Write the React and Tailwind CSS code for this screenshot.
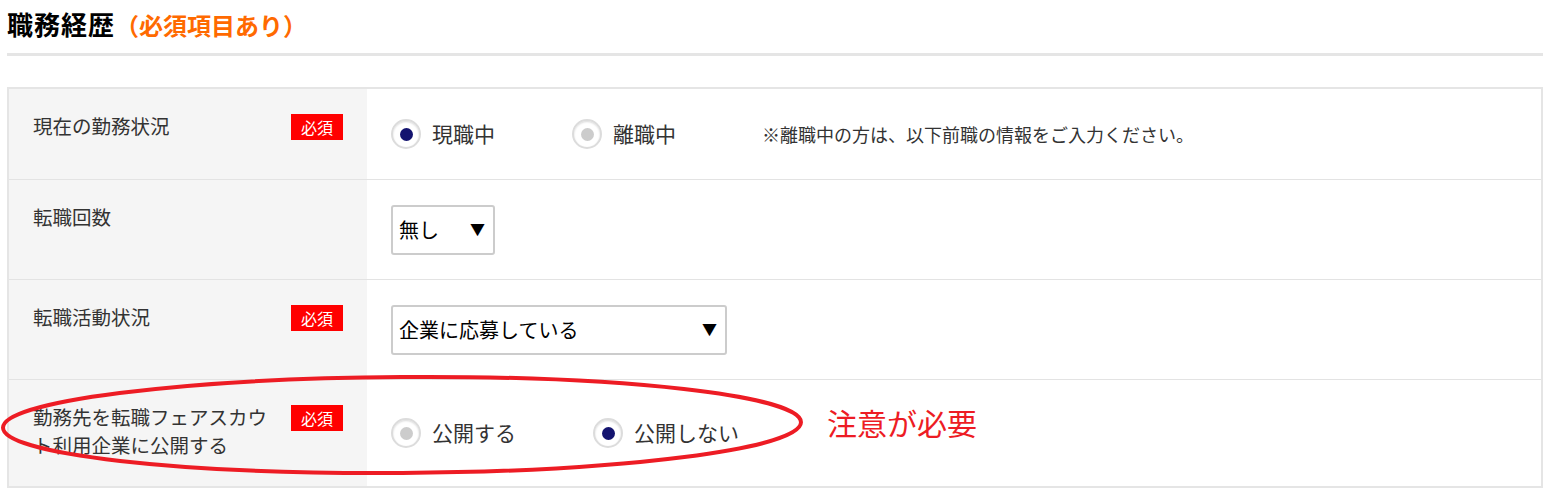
import React from 'react';

const font = { fontFamily: '"Noto Sans CJK JP", "Noto Sans", sans-serif' };

const Badge = () => (
  <span className="mt-[2px] flex h-[26px] w-[52px] shrink-0 items-center justify-center bg-[#ff0000] text-[16px] leading-none text-white">
    必須
  </span>
);

const Radio = ({ checked, label, className = '' }) => (
  <label className={`flex items-center ${className}`}>
    <span className="flex h-[30px] w-[30px] items-center justify-center rounded-full border-2 border-[#dcdcdc] bg-white shadow-[inset_0_1px_2px_rgba(0,0,0,0.15)]">
      <span className={`h-[13px] w-[13px] rounded-full ${checked ? 'bg-[#13136f]' : 'bg-[#cccccc]'}`} />
    </span>
    <span className="ml-[11px] text-[21px] text-[#333]">{label}</span>
  </label>
);

const Select = ({ value, width }) => (
  <div className={`flex h-[50px] ${width} items-center justify-between rounded-[3px] border-2 border-[#cccccc] bg-white pl-[6px] pr-[8px]`}>
    <span className="text-[20px] text-black">{value}</span>
    <span className="text-[15px] text-black">▼</span>
  </div>
);

const Row = ({ height, label, required, children, last }) => (
  <div className={`flex ${height} ${last ? '' : 'border-b border-[#e3e3e3]'}`}>
    <div className="flex w-[358px] shrink-0 items-start justify-between bg-[#f5f5f5] pl-[24px] pr-[24px] pt-[23px]">
      <span className="w-[250px] text-[19.5px] leading-[28px] text-[#333]">{label}</span>
      {required && <Badge />}
    </div>
    <div className="flex flex-1 items-center pl-[24px]">{children}</div>
  </div>
);

export default function App() {
  return (
    <div className="relative w-[1551px] bg-white pl-[7px] pr-[8px] pb-[13px]" style={font}>
      <div className="pt-[8px] pb-[12px]">
        <h2 className="text-[26px] font-bold leading-[32px] tracking-[1px] text-black">
          職務経歴<span className="text-[24px] tracking-[0px] text-[#ff6a00]">（必須項目あり）</span>
        </h2>
      </div>
      <div className="h-[3px] bg-[#e5e5e5]" />
      <div className="mt-[31px] border-2 border-[#e5e5e5]">
        <Row height="h-[91px]" label="現在の勤務状況" required>
          <Radio checked label="現職中" className="w-[181px]" />
          <Radio label="離職中" className="w-[190px]" />
          <span className="text-[18px] text-[#333]">※離職中の方は、以下前職の情報をご入力ください。</span>
        </Row>
        <Row height="h-[100px]" label="転職回数">
          <Select value="無し" width="w-[104px]" />
        </Row>
        <Row height="h-[100px]" label="転職活動状況" required>
          <Select value="企業に応募している" width="w-[336px]" />
        </Row>
        <Row
          height="h-[106px]"
          label={<>勤務先を転職フェアスカウ<br />ト利用企業に公開する</>}
          required
          last
        >
          <Radio label="公開する" className="w-[202px]" />
          <Radio checked label="公開しない" />
          <span className="ml-[88px] -mt-[22px] text-[30px] text-[#ed1c24]">注意が必要</span>
        </Row>
      </div>
      <svg className="pointer-events-none absolute left-0 top-[372px]" width="810" height="108" viewBox="0 0 810 108">
        <ellipse cx="402" cy="53" rx="399" ry="48" fill="none" stroke="#ed1c24" strokeWidth="4" transform="rotate(-0.4 402 53)" />
      </svg>
    </div>
  );
}
